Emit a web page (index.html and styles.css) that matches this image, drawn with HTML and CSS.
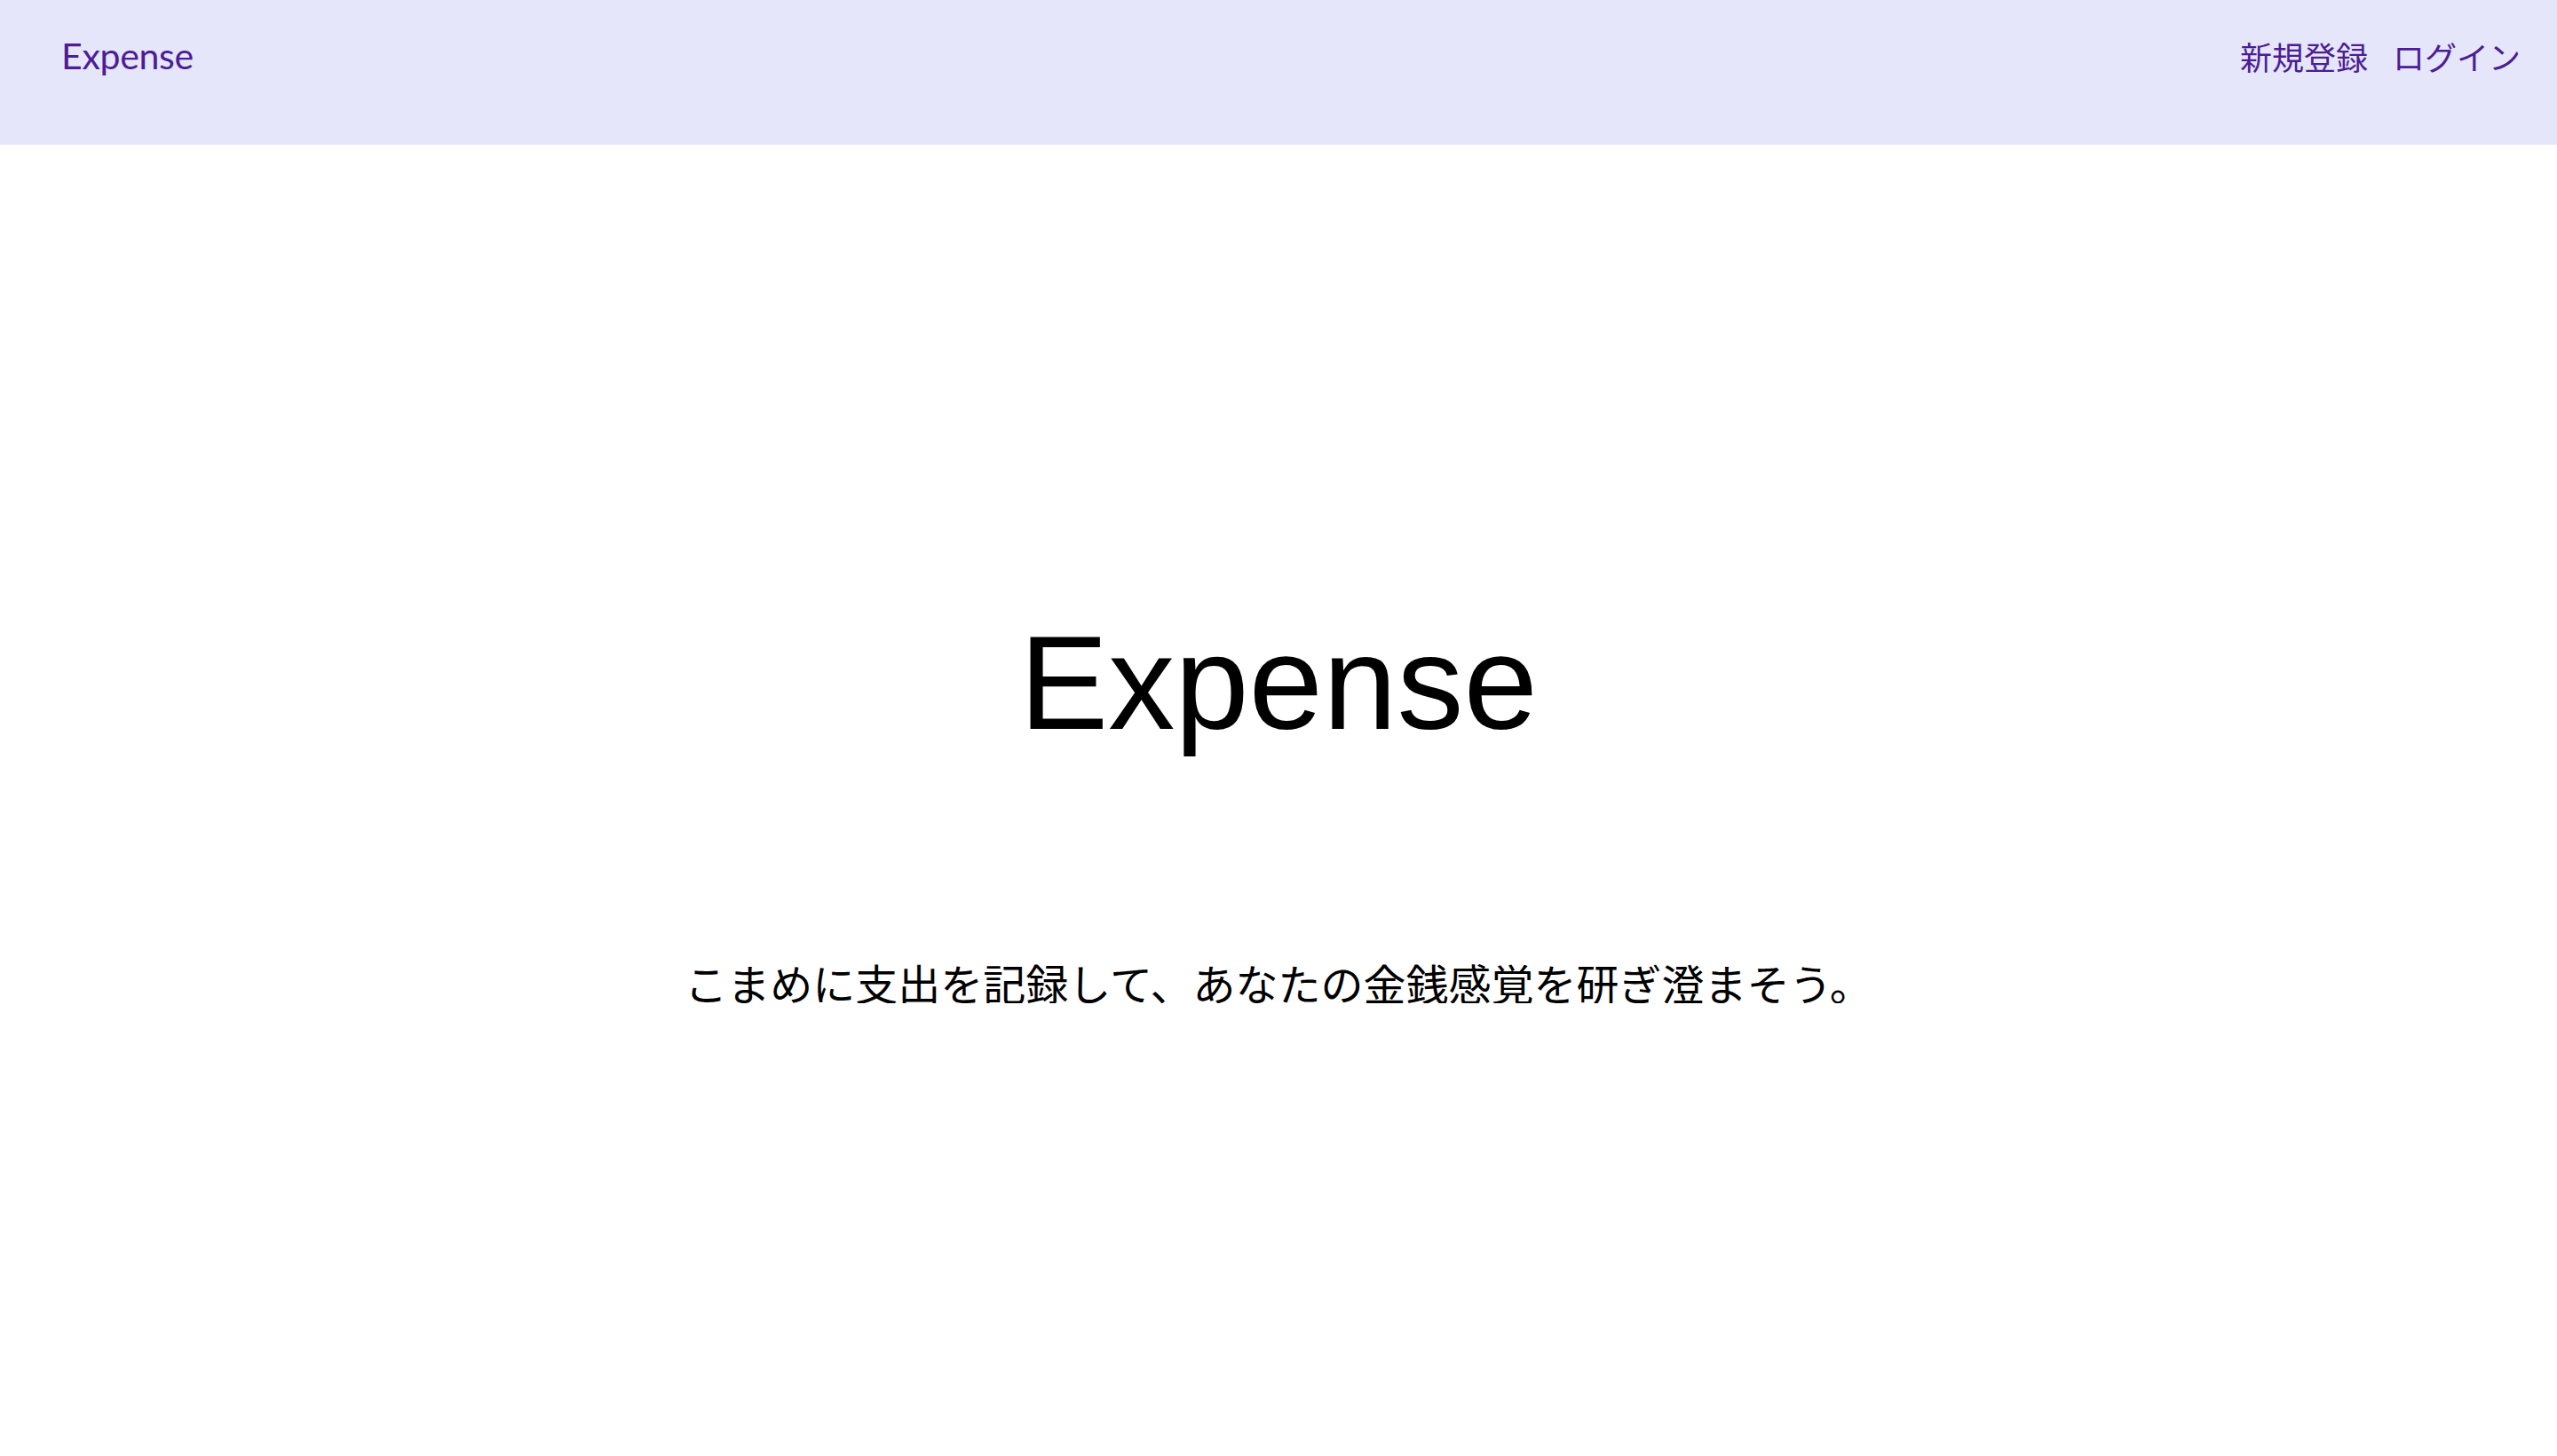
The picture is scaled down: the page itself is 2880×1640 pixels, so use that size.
FILE: index.html
```html
<!DOCTYPE html>
<html lang="ja">
<head>
<meta charset="utf-8">
<title>Expense</title>
<link rel="stylesheet" href="styles.css">
</head>
<body>
<header class="site-header">
  <a class="brand" href="#">Expense</a>
  <nav class="nav">
    <a class="nav-link" href="#">新規登録</a>
    <a class="nav-link" href="#">ログイン</a>
  </nav>
</header>
<main class="hero">
  <h1 class="hero-title">Expense</h1>
  <p class="hero-lead">こまめに支出を記録して、あなたの金銭感覚を研ぎ澄まそう。</p>
</main>
</body>
</html>
```
FILE: styles.css
```css
* { box-sizing: border-box; }
html, body { margin: 0; padding: 0; }
body {
  background: #ffffff;
  color: #000000;
  font-family: "Noto Sans CJK JP", "Liberation Sans", sans-serif;
}
a { text-decoration: none; }

.site-header {
  height: 163px;
  background: #e6e6fa;
  display: flex;
  justify-content: space-between;
  align-items: flex-start;
  padding: 45px 41px 0 69px;
}
.brand {
  font-family: "Lato", "Liberation Sans", sans-serif;
  font-size: 41px;
  line-height: 36px;
  color: #4c1d95;
  letter-spacing: -0.3px;
}
.nav {
  display: flex;
  gap: 28px;
}
.nav-link {
  font-family: "Noto Sans CJK JP", sans-serif;
  font-size: 36px;
  line-height: 36px;
  color: #4c1d95;
}
.nav-link-kana {
  letter-spacing: -1px;
}

.hero {
  display: flex;
  flex-direction: column;
  align-items: center;
  padding-top: 531px;
}
.hero-title {
  margin: 0;
  font-family: "Liberation Sans", Arial, sans-serif;
  font-weight: 400;
  font-size: 150px;
  line-height: 150px;
}
.hero-lead {
  margin: 238px 0 0;
  font-family: "Noto Sans CJK JP", sans-serif;
  font-size: 48px;
  line-height: 48px;
}
```
